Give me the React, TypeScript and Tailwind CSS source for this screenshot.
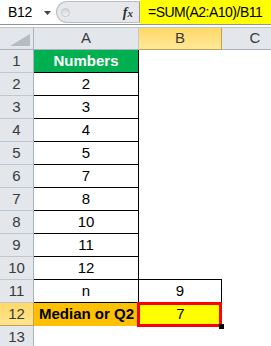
import React from "react";

const font = { fontFamily: '"Liberation Sans", Arial, sans-serif' };

const rows: { a: string; b: string }[] = [
  { a: "Numbers", b: "" },
  { a: "2", b: "" },
  { a: "3", b: "" },
  { a: "4", b: "" },
  { a: "5", b: "" },
  { a: "7", b: "" },
  { a: "8", b: "" },
  { a: "10", b: "" },
  { a: "11", b: "" },
  { a: "12", b: "" },
  { a: "n", b: "9" },
  { a: "Median or Q2", b: "7" },
  { a: "", b: "" },
];

function RowHeader({ n }: { n: number }) {
  const sel = n === 12;
  return (
    <div
      className={
        "flex items-center justify-center border-r border-b text-[15px] " +
        (sel
          ? "bg-gradient-to-b from-[#ffd966] to-[#ffe48f] border-[#c9a24f] text-[#3a3a3a]"
          : "bg-[#e3e6ea] border-r-[#a9b2bc] border-b-[#bfc6ce] text-[#3a3a3a]")
      }
    >
      {n}
    </div>
  );
}

function CellA({ i, text }: { i: number; text: string }) {
  if (i === 0)
    return (
      <div className="flex items-center justify-center bg-[#00b050] text-white font-bold text-[15px] border-r border-b border-black">
        {text}
      </div>
    );
  if (i === 11)
    return (
      <div className="flex items-center justify-center bg-[#ffc000] text-black font-bold text-[15px]">
        {text}
      </div>
    );
  if (i === 12) return <div />;
  return (
    <div className="flex items-center justify-center bg-white text-black text-[15px] border-r border-b border-black">
      {text}
    </div>
  );
}

function CellB({ i, text }: { i: number; text: string }) {
  if (i === 9) return <div className="border-b border-black" />;
  if (i === 10)
    return (
      <div className="flex items-center justify-center text-black text-[15px] border-r border-b border-black">
        {text}
      </div>
    );
  if (i === 11)
    return (
      <div className="relative flex items-center justify-center bg-[#ffff00] text-black text-[15px]">
        {text}
        <div className="absolute -left-[2px] -top-[1px] right-0 -bottom-[1px] border-[3px] border-[#ff0000]" />
        <div className="absolute -right-[2px] -bottom-[3px] w-[5px] h-[5px] bg-black" />
      </div>
    );
  return <div />;
}

export default function App() {
  return (
    <div className="w-[271px] h-[346px] overflow-hidden bg-white" style={font}>
      {/* formula bar */}
      <div className="flex h-[25px] border-b border-[#8e949b]">
        <div className="w-[56px] flex items-center bg-white pl-[8px] text-[14px] tracking-[-0.3px] text-black">
          <span>B12</span>
          <svg width="7" height="4" viewBox="0 0 7 4" className="ml-[12px] mt-[1px]">
            <path d="M0 0 L7 0 L3.5 4 Z" fill="#444" />
          </svg>
        </div>
        <div className="w-[84px] flex items-center bg-[#e6e8eb] rounded-l-[12px] border border-[#b9bec5] border-r-[#9aa0a7] my-[1px] relative">
          <div className="ml-[4px] w-[9px] h-[9px] rounded-full bg-gradient-to-b from-[#d0d3d7] to-[#f3f4f5] border border-[#c4c8cd]" />
          <span
            className="ml-auto mr-[6px] text-[14px] italic font-bold text-[#333]"
            style={{ fontFamily: '"Liberation Serif", "Times New Roman", serif' }}
          >
            f<span className="text-[11px]">x</span>
          </span>
        </div>
        <div className="flex-1 flex items-center bg-[#ffff00] pl-[8px] text-[14px] tracking-[-0.5px] text-black">
          =SUM(A2:A10)/B11
        </div>
      </div>
      <div className="h-[3px] bg-white border-b border-[#c2c7cd]" />
      {/* grid */}
      <div className="grid grid-cols-[34px_105px_83px_66px] grid-rows-[22px_repeat(12,23px)_23px]">
        {/* header row */}
        <div className="relative bg-[#e3e6ea] border-r border-b border-[#a9b2bc]">
          <svg width="20" height="12" viewBox="0 0 20 12" className="absolute right-[3px] bottom-[3px]">
            <path d="M20 0 L20 12 L0 12 Z" fill="#b6bcc4" />
          </svg>
        </div>
        <div className="flex items-center justify-center bg-[#e3e6ea] border-r border-b border-r-[#c3c9d0] border-b-[#a9b2bc] text-[15px] text-[#3a3a3a]">
          A
        </div>
        <div className="flex items-center justify-center bg-gradient-to-b from-[#ffd966] to-[#ffe898] border-r border-b border-[#c9a24f] text-[15px] text-[#3a3a3a]">
          B
        </div>
        <div className="flex items-center justify-center bg-[#e3e6ea] border-b border-[#a9b2bc] text-[15px] text-[#3a3a3a]">
          C
        </div>
        {rows.map((r, i) => (
          <React.Fragment key={i}>
            <RowHeader n={i + 1} />
            <CellA i={i} text={r.a} />
            <CellB i={i} text={r.b} />
            <div />
          </React.Fragment>
        ))}
      </div>
    </div>
  );
}
